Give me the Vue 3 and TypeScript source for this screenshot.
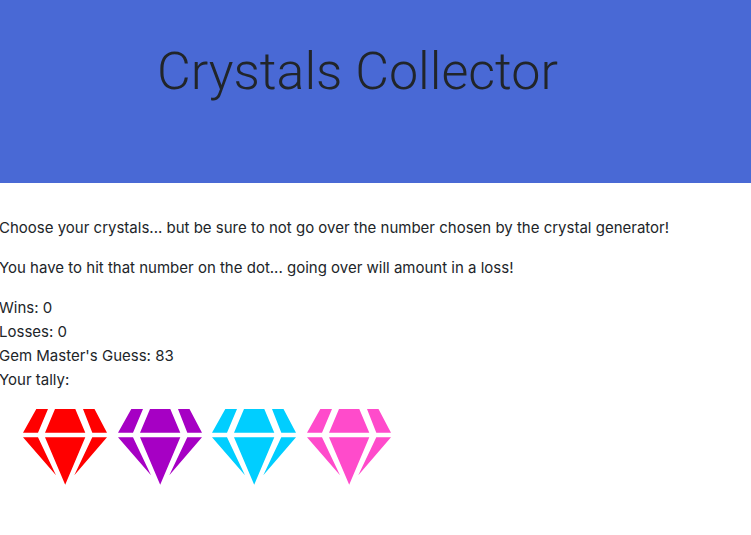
<script setup lang="ts">
import { ref } from 'vue'

interface Crystal {
  name: string
  value: number
}

const randomBetween = (min: number, max: number): number =>
  Math.floor(Math.random() * (max - min + 1)) + min

const makeCrystals = (): Crystal[] =>
  ['red', 'purple', 'blue', 'pink'].map((name) => ({ name, value: randomBetween(1, 12) }))

const wins = ref(0)
const losses = ref(0)
const target = ref(83)
const tally = ref<number | null>(null)
const crystals = ref<Crystal[]>(makeCrystals())

function restart(): void {
  target.value = randomBetween(19, 120)
  tally.value = null
  crystals.value = makeCrystals()
}

function collect(crystal: Crystal): void {
  tally.value = (tally.value ?? 0) + crystal.value
  if (tally.value === target.value) {
    wins.value++
    restart()
  } else if (tally.value > target.value) {
    losses.value++
    restart()
  }
}
</script>

<template>
  <header class="banner">
    <h1>Crystals Collector</h1>
  </header>
  <main class="game">
    <p>Choose your crystals... but be sure to not go over the number chosen by the crystal generator!</p>
    <p>You have to hit that number on the dot... going over will amount in a loss!</p>
    <div>Wins: {{ wins }}</div>
    <div>Losses: {{ losses }}</div>
    <div>Gem Master's Guess: {{ target }}</div>
    <div>Your tally: {{ tally }}</div>
    <div class="crystals">
      <button
        v-for="crystal in crystals"
        :key="crystal.name"
        type="button"
        :class="['crystal', crystal.name]"
        :aria-label="crystal.name"
        @click="collect(crystal)"
      >
        <svg viewBox="0 0 84 76" aria-hidden="true">
          <path d="M13.3 0H25L15 23.7H0ZM32 0H52.3L62.3 23.7H22ZM60 0H71.5L84 23.7H69.3Z" />
          <path d="M0 28.3H15L33 66.3ZM22 28.3H62.3L42.2 75.8ZM69.3 28.3H84L51.3 66.3Z" />
        </svg>
      </button>
    </div>
  </main>
</template>

<style>
body {
  margin: 0;
  background: #fff;
  overflow-x: hidden;
}
</style>

<style scoped>
.banner {
  padding: 38px 36px 78px 0;
  background: #4969d5;
  color: #212529;
  text-align: center;
}

h1 {
  margin: 0;
  font-family: Roboto, "Liberation Sans", sans-serif;
  font-size: 52px;
  font-weight: 300;
  line-height: 67px;
}

.game {
  margin-left: -1px;
  padding-top: 33px;
  color: #212529;
  font-family: Inter, "Liberation Sans", sans-serif;
  font-size: 15px;
  line-height: 24px;
}

p {
  margin: 0 0 16px;
}

.crystals {
  display: grid;
  grid-template-columns: repeat(4, 1fr);
  width: 378px;
  padding: 17px 0 0 19px;
}

.crystal {
  display: flex;
  justify-content: center;
  padding: 0;
  border: 0;
  background: none;
  cursor: pointer;
}

.crystal svg {
  width: 84px;
  height: 76px;
  fill: currentColor;
}

.red { color: #ff0000; }
.purple { color: #a600c4; }
.blue { color: #00ceff; }
.pink { color: #ff4bcb; }
</style>
